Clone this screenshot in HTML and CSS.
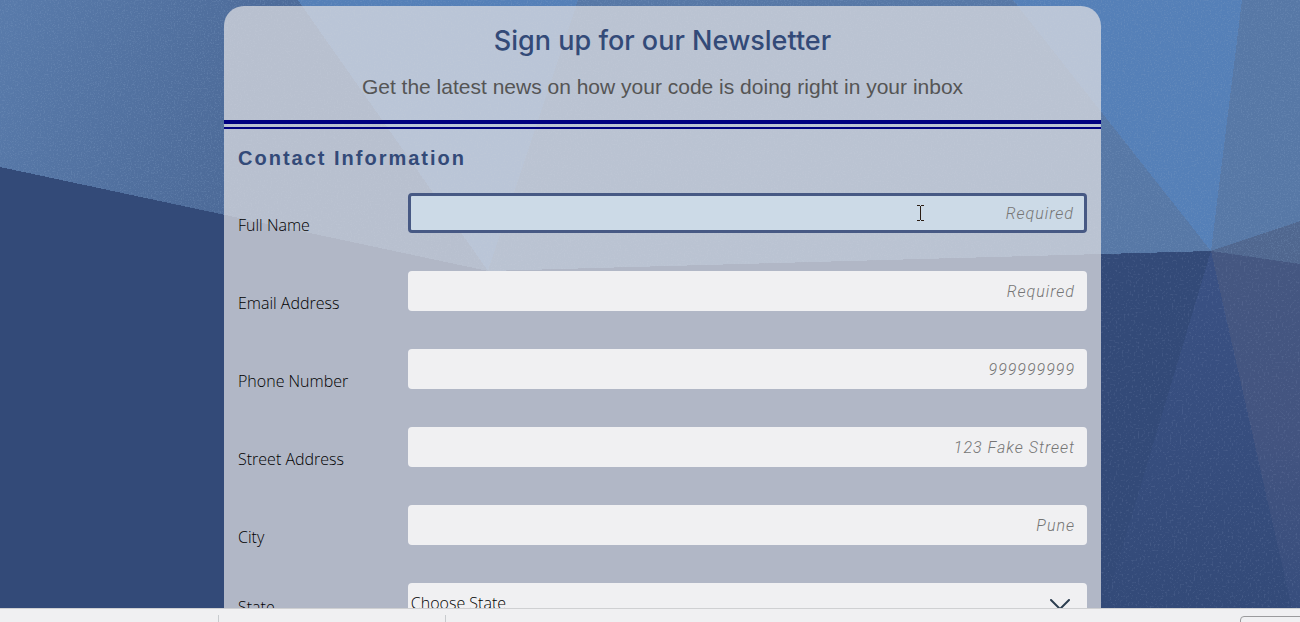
FILE: index.html
```html
<!DOCTYPE html>
<html lang="en">
<head>
<meta charset="utf-8">
<title>Sign up for our Newsletter</title>
<link rel="stylesheet" href="styles.css">
</head>
<body>
<svg class="backdrop" viewBox="0 0 1300 622" preserveAspectRatio="none" shape-rendering="crispEdges" aria-hidden="true">
  <defs>
    <linearGradient id="haze" gradientUnits="userSpaceOnUse" x1="0" y1="40" x2="240" y2="130">
      <stop offset="0" stop-color="#587aaa"/><stop offset="1" stop-color="#4d6b99"/>
    </linearGradient>
    <linearGradient id="fold" x1="0" y1="0" x2="0" y2="1">
      <stop offset="0" stop-color="#3a5184"/><stop offset="1" stop-color="#334a78"/>
    </linearGradient>
    <linearGradient id="edge" x1="0" y1="0" x2="0" y2="1">
      <stop offset="0" stop-color="#455781"/><stop offset=".5" stop-color="#435480"/><stop offset="1" stop-color="#364d7d"/>
    </linearGradient>
    <filter id="grain" x="0" y="0" width="100%" height="100%">
      <feTurbulence type="fractalNoise" baseFrequency=".7" numOctaves="2" seed="4"/>
      <feColorMatrix values="0 0 0 0 .22  0 0 0 0 .34  0 0 0 0 .55  4 0 0 0 -2"/>
    </filter>
    <filter id="dust" x="0" y="0" width="100%" height="100%">
      <feTurbulence type="fractalNoise" baseFrequency=".5" numOctaves="2" seed="9"/>
      <feColorMatrix values="0 0 0 0 .36  0 0 0 0 .44  0 0 0 0 .64  5 0 0 0 -2.8"/>
    </filter>
    <clipPath id="sky"><path d="M0 0H1300V264L1211 251L488 271L0 167Z"/></clipPath>
    <clipPath id="ground"><path d="M1101 254L1211 251L1300 264V622H1101Z"/></clipPath>
  </defs>
  <rect width="1300" height="622" fill="#334a78"/>
  <path d="M0 0H298L488 271L0 167Z" fill="url(#haze)"/>
  <path d="M298 0H578L488 271Z" fill="#5580b8"/>
  <path d="M578 0H1013L1211 251L488 271Z" fill="#5778a6"/>
  <path d="M1013 0H1242L1211 251Z" fill="#5580b8"/>
  <path d="M1242 0H1300V221L1211 251Z" fill="#5778a6"/>
  <path d="M1211 251L1300 221V264Z" fill="#50678f"/>
  <path d="M1211 251L1300 264V622L1295 622Z" fill="url(#edge)"/>
  <path d="M1211 251L1295 622H1100Z" fill="url(#fold)"/>
  <g clip-path="url(#sky)"><rect width="1300" height="275" filter="url(#grain)" opacity=".28"/></g>
  <g clip-path="url(#ground)"><rect x="1000" y="250" width="300" height="372" filter="url(#dust)" opacity=".14"/></g>
</svg>

<main class="page">
  <form class="card">
    <header class="card-header">
      <h1 class="title">Sign up for our Newsletter</h1>
      <p class="tagline">Get the latest news on how your code is doing right in your inbox</p>
    </header>
    <section class="contact">
      <h2 class="section-title">Contact Information</h2>
      <div class="row">
        <label class="label" for="name">Full Name</label>
        <div class="control">
          <input class="field field-active" id="name" type="text" placeholder="Required">
          <svg class="caret" viewBox="0 0 7 16" aria-hidden="true"><path d="M0 .5H3M4 .5H7M3.5 1V15M0 15.5H3M4 15.5H7" fill="none" stroke="#2b1d14"/></svg>
        </div>
      </div>
      <div class="row">
        <label class="label" for="email">Email Address</label>
        <div class="control"><input class="field" id="email" type="email" placeholder="Required"></div>
      </div>
      <div class="row">
        <label class="label" for="phone">Phone Number</label>
        <div class="control"><input class="field" id="phone" type="tel" placeholder="999999999"></div>
      </div>
      <div class="row">
        <label class="label" for="street">Street Address</label>
        <div class="control"><input class="field" id="street" type="text" placeholder="123 Fake Street"></div>
      </div>
      <div class="row">
        <label class="label" for="city">City</label>
        <div class="control"><input class="field" id="city" type="text" placeholder="Pune"></div>
      </div>
      <div class="row">
        <label class="label label-select" for="state">State</label>
        <div class="control">
          <select class="field select" id="state"><option>Choose State</option></select>
          <svg class="chevron" viewBox="0 0 20 12" aria-hidden="true"><path d="M1 1L10 10L19 1" fill="none" stroke="#2c3e50" stroke-width="2" stroke-linecap="round"/></svg>
        </div>
      </div>
    </section>
  </form>
</main>

<footer class="shelf">
  <div class="shelf-item shelf-first"></div>
  <div class="shelf-item shelf-second"></div>
  <button class="shelf-button" type="button" aria-label="Show all"></button>
</footer>
</body>
</html>
```

FILE: styles.css
```css
* {
  box-sizing: border-box;
}

body {
  display: flex;
  flex-direction: column;
  height: 100vh;
  margin: 0;
  overflow: hidden;
  background: #334a78;
  font-family: "Open Sans", "Noto Sans", sans-serif;
  color: #000;
}

.backdrop {
  position: absolute;
  inset: 0;
  z-index: -1;
  width: 100%;
  height: 100%;
}

.page {
  display: grid;
  flex: 1;
  grid-template-columns: 224fr 877fr 199fr;
  min-height: 0;
  padding-top: 6px;
  overflow: hidden;
}

.card {
  grid-column: 2;
  min-width: 0;
  border-radius: 20px 20px 0 0;
  background: rgba(221, 221, 225, 0.74);
}

.card-header {
  padding: 17px 14px 18px;
  border-bottom: 4px solid #000080;
  text-align: center;
}

.title {
  margin: 0;
  color: #334a78;
  font-family: Inter, sans-serif;
  font-size: 27px;
  font-weight: 500;
  line-height: 36px;
}

.tagline {
  margin: 13px 0 0;
  color: #555;
  font-family: "Liberation Sans", Arial, sans-serif;
  font-size: 21px;
  line-height: 30px;
}

.contact {
  margin-top: 3px;
  padding: 14px 14px 0;
  border-top: 2px solid #000080;
}

.section-title {
  margin: 0 0 20px;
  color: #334a78;
  font-family: "Liberation Sans", Arial, sans-serif;
  font-size: 20px;
  font-weight: 700;
  letter-spacing: 2px;
  line-height: 30px;
}

.row {
  display: grid;
  grid-template-columns: 1fr 4fr;
  align-items: start;
  height: 78px;
}

.label {
  padding-top: 21px;
  font-size: 16px;
  font-weight: 300;
  line-height: 22px;
}

.label-select {
  padding-top: 13px;
}

.control {
  position: relative;
}

.field {
  display: block;
  width: 100%;
  height: 40px;
  padding: 0 12px;
  border: 0;
  border-radius: 4px;
  outline: 0;
  background: #f0f0f2;
  font-family: Roboto, sans-serif;
  font-size: 16px;
  letter-spacing: 1px;
  text-align: right;
}

.field::placeholder {
  color: #757575;
  font-style: italic;
  font-weight: 300;
  opacity: 1;
}

.field-active {
  padding: 0 10px;
  border: 3px solid #475984;
  background: #ccdae7;
}

.select {
  padding: 0 3px;
  appearance: none;
  color: #000;
  font-family: "Open Sans", sans-serif;
  font-size: 16px;
  font-weight: 300;
  letter-spacing: normal;
  text-align: left;
}

.caret {
  position: absolute;
  top: 12px;
  right: 163px;
  width: 7px;
  height: 16px;
}

.chevron {
  position: absolute;
  top: 16px;
  right: 17px;
  width: 20px;
  height: 12px;
  pointer-events: none;
}

.shelf {
  display: flex;
  height: 14px;
  padding-top: 6px;
  overflow: hidden;
  border-top: 1px solid #cfd0d2;
  background: #f0f0f2;
}

.shelf-item {
  border-right: 1px solid #c8cbce;
}

.shelf-first {
  width: 219px;
}

.shelf-second {
  width: 227px;
}

.shelf-button {
  width: 64px;
  height: 24px;
  margin: 1px -4px 0 auto;
  border: 1px solid #9b9b9d;
  border-radius: 4px;
  background: #f0f0f2;
}
```
